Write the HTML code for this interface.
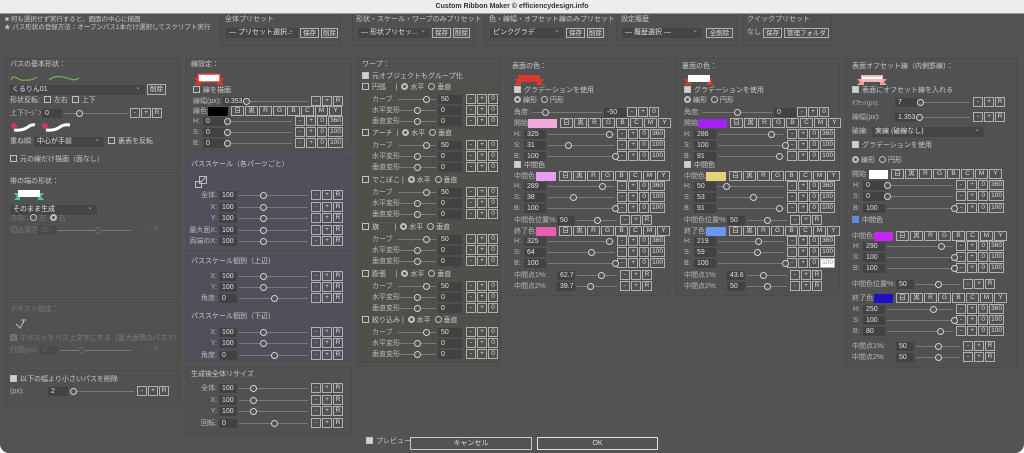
<!DOCTYPE html>
<html><head><meta charset="utf-8">
<style>
body{margin:0;width:1024px;height:453px;background:#fff;overflow:hidden;font-family:"Liberation Sans","Noto Sans CJK JP",sans-serif;position:relative}
#tb{position:absolute;left:0;top:0;width:1024px;height:13px;background:#ececec;border-bottom:1px solid #999;font-size:7px;font-weight:bold;color:#333;text-align:center;line-height:13px}
#w{position:absolute;left:0;top:14px;width:1024px;height:439px;background:#535353;border-radius:0 0 9px 9px}
.a{position:absolute;font-size:7px;color:#c8c8c8;white-space:nowrap;line-height:10px}
.p{position:absolute;border:1px solid #4b4b4b;background:#515151;box-sizing:border-box}
.r{position:absolute;display:flex;align-items:center;height:10px;font-size:7px;color:#b8b8b8;white-space:nowrap}
.r>span{flex:none}
.i{background:#424242;color:#e0e0e0;height:9px;line-height:9px;padding-left:3px;box-sizing:border-box}
.r>.s{position:relative;height:9px;flex:1 1 auto}
.s:before{content:"";position:absolute;left:2px;right:2px;top:4px;height:1px;background:#7a7a7a}
.s i{position:absolute;top:1px;width:5px;height:5px;border:1px solid #d0d0d0;border-radius:50%;background:#535353;margin-left:-3px}
.b{border:1px solid #b0b0b0;height:8px;line-height:8px;min-width:6px;padding:0 1px;margin-left:1px;font-size:6.5px;color:#ddd;text-align:center}
.c{min-width:9px}
.sw{height:9px;margin-right:2px}
.cb{display:inline-block;width:5px;height:5px;border:1px solid #c0c0c0;margin-right:3px;vertical-align:-1px}
.on{background:#d0d0d0}
.rd{display:inline-block;width:5px;height:5px;border:1px solid #c0c0c0;border-radius:50%;margin-right:2px;vertical-align:-1px}
.rd.on{background:#535353;box-shadow:inset 0 0 0 1px #d0d0d0}
.dd{position:absolute;background:#454545;color:#e0e0e0;font-size:7px;height:10px;line-height:10px;padding-left:3px;box-sizing:border-box}
.dd:after{content:"⌄";position:absolute;right:4px;top:-2px;color:#aaa;font-size:7px}
.bb{position:absolute;border:1px solid #b0b0b0;font-size:6.5px;color:#ddd;height:10px;line-height:10px;text-align:center;box-sizing:border-box}
.g{position:absolute;background:#50504a;border:1px solid #4c4c46;box-sizing:border-box}
.bl{position:absolute;background:#4f505a;border:1px solid #4b4c55;box-sizing:border-box}
.dim{color:#7a7a7a}
.dim .b{border-color:#6a6a6a;color:#6a6a6a}
</style></head><body>
<div id="tb">Custom Ribbon Maker © efficiencydesign.info</div>
<div id="w"></div>

<div class="a" style="left:5px;top:15px;font-size:6.5px">■ 何も選択せず実行すると、画面の中心に描画</div>
<div class="a" style="left:4px;top:23px;font-size:6.5px">★ パス形状の登録方法：オープンパス1本だけ選択してスクリプト実行</div>

<div class="p" style="left:220px;top:15px;width:121px;height:31px"></div>
<div class="a" style="left:225px;top:15px">全体プリセット</div>
<div class="dd" style="left:226px;top:28px;width:72px">― プリセット選択...</div>
<div class="bb" style="left:300px;top:28px;width:19px">保存</div>
<div class="bb" style="left:321px;top:28px;width:17px">削除</div>

<div class="p" style="left:352px;top:15px;width:122px;height:31px"></div>
<div class="a" style="left:356px;top:15px">形状・スケール・ワープのみプリセット</div>
<div class="dd" style="left:358px;top:28px;width:72px">― 形状プリセッ...</div>
<div class="bb" style="left:432px;top:28px;width:19px">保存</div>
<div class="bb" style="left:453px;top:28px;width:17px">削除</div>

<div class="p" style="left:484px;top:15px;width:124px;height:31px"></div>
<div class="a" style="left:489px;top:15px">色・線幅・オフセット線のみプリセット</div>
<div class="dd" style="left:490px;top:28px;width:74px">ピンクグラデ</div>
<div class="bb" style="left:566px;top:28px;width:19px">保存</div>
<div class="bb" style="left:587px;top:28px;width:17px">削除</div>

<div class="p" style="left:616px;top:15px;width:121px;height:31px"></div>
<div class="a" style="left:621px;top:15px">設定履歴</div>
<div class="dd" style="left:622px;top:28px;width:80px">― 履歴選択 ―</div>
<div class="bb" style="left:706px;top:28px;width:27px">全削除</div>

<div class="p" style="left:742px;top:15px;width:90px;height:31px"></div>
<div class="a" style="left:747px;top:15px">クイックプリセット</div>
<div class="a" style="left:747px;top:28px">なし</div>
<div class="bb" style="left:763px;top:28px;width:19px">保存</div>
<div class="bb" style="left:784px;top:28px;width:45px">管理フォルダ</div>

<!-- Column 1 -->
<div class="p" style="left:5px;top:58px;width:175px;height:112px"></div>
<div class="a" style="left:10px;top:60px">パスの基本形状：</div>
<svg style="position:absolute;left:9px;top:72px" width="72" height="12"><path d="M2 8 Q4 3 8 6 T16 8 Q22 9 28 5" stroke="#6ab04c" stroke-width="1.3" fill="none"/><path d="M40 8 Q46 3 54 5 T62 7 Q66 9 70 6" stroke="#6ab04c" stroke-width="1.3" fill="none"/></svg>
<div class="dd" style="left:9px;top:85px;width:136px">くるりん01</div>
<div class="bb" style="left:147px;top:84px;width:19px;height:11px">削除</div>
<div class="a" style="left:10px;top:96px">形状反転: &nbsp;<span class="cb"></span>左右 &nbsp;<span class="cb"></span>上下</div>
<div class="r" style="left:10px;top:108px;width:152px"><span style="width:32px">上下ﾏｰｼﾞﾝ</span><span class="i" style="width:20px">0</span><span class="s"><i style="left:25%"></i></span><span class="b">-</span><span class="b">+</span><span class="b">R</span></div>
<svg style="position:absolute;left:10px;top:121px" width="65" height="13"><path d="M4 9 Q12 10 18 6 Q22 3 25 4" stroke="#fff" stroke-width="3" fill="none"/><circle cx="4" cy="5" r="3" fill="#d0307a"/><path d="M36 9 Q44 10 50 6 Q54 3 60 4" stroke="#fff" stroke-width="3" fill="none"/><circle cx="35" cy="5" r="3" fill="#d0307a"/></svg>
<div class="a" style="left:10px;top:137px">重ね順:</div>
<div class="dd" style="left:34px;top:137px;width:70px">中心が手前</div>
<div class="a" style="left:108px;top:137px"><span class="cb"></span>裏表を反転</div>
<div class="a" style="left:10px;top:155px"><span class="cb"></span>元の線だけ描画（面なし）</div>

<div class="p" style="left:5px;top:172px;width:175px;height:128px"></div>
<div class="a" style="left:10px;top:177px">帯の端の形状：</div>
<svg style="position:absolute;left:12px;top:188px" width="34" height="14"><path d="M2 5 L8 5 L8 12 L2 12 L5 8.5Z M26 5 L32 5 L29 8.5 L32 12 L26 12Z" fill="#4fc49a"/><rect x="6" y="2" width="22" height="7" fill="#fff"/></svg>
<div class="dd" style="left:10px;top:205px;width:87px">そのまま生成</div>
<div class="a dim" style="left:10px;top:214px">方向: &nbsp;<span class="rd"></span>左 &nbsp;<span class="rd on"></span>右</div>
<div class="r dim" style="left:10px;top:225px;width:150px"><span style="width:28px">切込深さ</span><span class="i" style="width:18px;background:#4a4a4a;color:#6a6a6a">50</span><span class="s"><i style="left:55%;border-color:#6a6a6a"></i></span><span class="b" style="border:none">-</span><span class="b" style="border:none">+</span><span class="b" style="border:none">R</span></div>

<div class="p" style="left:5px;top:302px;width:175px;height:65px"></div>
<div class="a dim" style="left:10px;top:305px">テキスト設定：</div>
<svg style="position:absolute;left:14px;top:318px" width="14" height="12"><path d="M2 6 L6 10 L10 3 M7 2 L12 2 M9.5 2 L9.5 5" stroke="#bbb" stroke-width="1" fill="none"/></svg>
<div class="a dim" style="left:10px;top:334px"><span class="cb" style="border-color:#777;background:#6a6a6a"></span>テキストをパス上文字にする（最大面積のパスで）</div>
<div class="r dim" style="left:10px;top:345px;width:150px"><span style="width:30px">行間(px):</span><span class="i" style="width:18px;background:#4a4a4a;color:#6a6a6a">0</span><span class="s"><i style="left:30%;border-color:#6a6a6a"></i></span><span class="b" style="border:none">-</span><span class="b" style="border:none">+</span><span class="b" style="border:none">R</span></div>

<div class="p" style="left:5px;top:370px;width:175px;height:34px"></div>
<div class="a" style="left:10px;top:375px"><span class="cb on"></span>以下の幅より小さいパスを削除</div>
<div class="r" style="left:10px;top:386px;width:159px"><span style="width:38px">(px):</span><span class="i" style="width:20px">2</span><span class="s"><i style="left:8%"></i></span><span class="b">-</span><span class="b">+</span><span class="b">R</span></div>

<!-- Column 2 -->
<div class="p" style="left:186px;top:58px;width:166px;height:93px"></div>
<div class="a" style="left:191px;top:60px">線設定：</div>
<svg style="position:absolute;left:192px;top:72px" width="34" height="14"><path d="M2 6 L9 6 L9 13 L2 13 L5 9.5Z M25 6 L32 6 L29 9.5 L32 13 L25 13Z" fill="#d83a2e"/><rect x="6" y="2" width="22" height="8" fill="#fff" stroke="#d83a2e" stroke-width="1.5"/></svg>
<div class="a" style="left:193px;top:86px"><span class="cb"></span>線を描画</div>
<div class="r" style="left:193px;top:96px;width:150px"><span style="width:29px">線幅(px):</span><span class="i" style="width:22px">0.353</span><span class="s"><i style="left:3%"></i></span><span class="b">-</span><span class="b">+</span><span class="b">R</span></div>
<div class="r" style="left:193px;top:106px;width:150px"><span style="width:15px">線色:</span><span class="sw" style="width:20px;background:#000"></span><span class="b c">白</span><span class="b c">黒</span><span class="b c">R</span><span class="b c">G</span><span class="b c">B</span><span class="b c">C</span><span class="b c">M</span><span class="b c">Y</span></div>
<div class="r" style="left:193px;top:116px;width:150px"><span style="width:10px">H:</span><span class="i" style="width:22px">0</span><span class="s"><i style="left:3%"></i></span><span class="b">-</span><span class="b">+</span><span class="b">0</span><span class="b">360</span></div>
<div class="r" style="left:193px;top:127px;width:150px"><span style="width:10px">S:</span><span class="i" style="width:22px">0</span><span class="s"><i style="left:3%"></i></span><span class="b">-</span><span class="b">+</span><span class="b">0</span><span class="b">100</span></div>
<div class="r" style="left:193px;top:138px;width:150px"><span style="width:10px">B:</span><span class="i" style="width:22px">0</span><span class="s"><i style="left:3%"></i></span><span class="b">-</span><span class="b">+</span><span class="b">0</span><span class="b">100</span></div>

<div class="bl" style="left:186px;top:156px;width:166px;height:96px"></div>
<div class="a" style="left:191px;top:160px">パススケール（各パーツごと）</div>
<svg style="position:absolute;left:194px;top:175px" width="14" height="14"><rect x="1.5" y="6.5" width="6" height="6" stroke="#bbb" fill="none"/><rect x="5.5" y="1.5" width="7" height="7" stroke="#bbb" fill="none"/><path d="M8 6 L12 2" stroke="#bbb"/></svg>
<div class="r" style="left:188px;top:190px;width:155px"><span style="width:31px;text-align:right;padding-right:2px;box-sizing:border-box">全体:</span><span class="i" style="width:18px">100</span><span class="s"><i style="left:35%"></i></span><span class="b">-</span><span class="b">+</span><span class="b">R</span></div>
<div class="r" style="left:188px;top:202px;width:155px"><span style="width:31px;text-align:right;padding-right:2px;box-sizing:border-box">X:</span><span class="i" style="width:18px">100</span><span class="s"><i style="left:35%"></i></span><span class="b">-</span><span class="b">+</span><span class="b">R</span></div>
<div class="r" style="left:188px;top:213px;width:155px"><span style="width:31px;text-align:right;padding-right:2px;box-sizing:border-box">Y:</span><span class="i" style="width:18px">100</span><span class="s"><i style="left:35%"></i></span><span class="b">-</span><span class="b">+</span><span class="b">R</span></div>
<div class="r" style="left:188px;top:225px;width:155px"><span style="width:31px;text-align:right;padding-right:2px;box-sizing:border-box">最大面X:</span><span class="i" style="width:18px">100</span><span class="s"><i style="left:35%"></i></span><span class="b">-</span><span class="b">+</span><span class="b">R</span></div>
<div class="r" style="left:188px;top:236px;width:155px"><span style="width:31px;text-align:right;padding-right:2px;box-sizing:border-box">両端のX:</span><span class="i" style="width:18px">100</span><span class="s"><i style="left:35%"></i></span><span class="b">-</span><span class="b">+</span><span class="b">R</span></div>

<div class="bl" style="left:186px;top:255px;width:166px;height:52px"></div>
<div class="a" style="left:191px;top:257px">パススケール個別（上辺）</div>
<div class="r" style="left:188px;top:271px;width:155px"><span style="width:31px;text-align:right;padding-right:2px;box-sizing:border-box">X:</span><span class="i" style="width:18px">100</span><span class="s"><i style="left:35%"></i></span><span class="b">-</span><span class="b">+</span><span class="b">R</span></div>
<div class="r" style="left:188px;top:282px;width:155px"><span style="width:31px;text-align:right;padding-right:2px;box-sizing:border-box">Y:</span><span class="i" style="width:18px">100</span><span class="s"><i style="left:35%"></i></span><span class="b">-</span><span class="b">+</span><span class="b">R</span></div>
<div class="r" style="left:188px;top:293px;width:155px"><span style="width:31px;text-align:right;padding-right:2px;box-sizing:border-box">角度:</span><span class="i" style="width:18px">0</span><span class="s"><i style="left:51%"></i></span><span class="b">-</span><span class="b">+</span><span class="b">R</span></div>

<div class="bl" style="left:186px;top:310px;width:166px;height:52px"></div>
<div class="a" style="left:191px;top:312px">パススケール個別（下辺）</div>
<div class="r" style="left:188px;top:327px;width:155px"><span style="width:31px;text-align:right;padding-right:2px;box-sizing:border-box">X:</span><span class="i" style="width:18px">100</span><span class="s"><i style="left:35%"></i></span><span class="b">-</span><span class="b">+</span><span class="b">R</span></div>
<div class="r" style="left:188px;top:338px;width:155px"><span style="width:31px;text-align:right;padding-right:2px;box-sizing:border-box">Y:</span><span class="i" style="width:18px">100</span><span class="s"><i style="left:35%"></i></span><span class="b">-</span><span class="b">+</span><span class="b">R</span></div>
<div class="r" style="left:188px;top:350px;width:155px"><span style="width:31px;text-align:right;padding-right:2px;box-sizing:border-box">角度:</span><span class="i" style="width:18px">0</span><span class="s"><i style="left:51%"></i></span><span class="b">-</span><span class="b">+</span><span class="b">R</span></div>

<div class="p" style="left:186px;top:366px;width:166px;height:68px"></div>
<div class="a" style="left:191px;top:370px">生成後全体リサイズ</div>
<div class="r" style="left:188px;top:383px;width:155px"><span style="width:31px;text-align:right;padding-right:2px;box-sizing:border-box">全体:</span><span class="i" style="width:18px">100</span><span class="s"><i style="left:22%"></i></span><span class="b">-</span><span class="b">+</span><span class="b">R</span></div>
<div class="r" style="left:188px;top:395px;width:155px"><span style="width:31px;text-align:right;padding-right:2px;box-sizing:border-box">X:</span><span class="i" style="width:18px">100</span><span class="s"><i style="left:22%"></i></span><span class="b">-</span><span class="b">+</span><span class="b">R</span></div>
<div class="r" style="left:188px;top:406px;width:155px"><span style="width:31px;text-align:right;padding-right:2px;box-sizing:border-box">Y:</span><span class="i" style="width:18px">100</span><span class="s"><i style="left:22%"></i></span><span class="b">-</span><span class="b">+</span><span class="b">R</span></div>
<div class="r" style="left:188px;top:418px;width:155px"><span style="width:31px;text-align:right;padding-right:2px;box-sizing:border-box">回転:</span><span class="i" style="width:18px">0</span><span class="s"><i style="left:51%"></i></span><span class="b">-</span><span class="b">+</span><span class="b">R</span></div>

<!-- Column 3 Warp -->
<div class="p" style="left:357px;top:58px;width:144px;height:308px"></div>
<div class="a" style="left:362px;top:60px">ワープ：</div>
<div class="a" style="left:362px;top:72px"><span class="cb on"></span>元オブジェクトもグループ化</div>

<div class="g" style="left:360px;top:84px;width:139px;height:44px"></div>
<div class="a" style="left:362px;top:83px"><span class="cb"></span>円弧 &nbsp;&nbsp;&nbsp;&nbsp;| &nbsp;<span class="rd on"></span>水平 &nbsp;<span class="rd"></span>垂直</div>
<div class="r" style="left:372px;top:94px;width:126px"><span style="width:24px">カーブ</span><span class="s"><i style="left:72%"></i></span><span class="i" style="width:24px">50</span><span style="width:3px"></span><span class="b">-</span><span class="b">+</span><span class="b">0</span></div>
<div class="r" style="left:372px;top:105px;width:126px"><span style="width:24px">水平変形</span><span class="s"><i style="left:50%"></i></span><span class="i" style="width:24px">0</span><span style="width:3px"></span><span class="b">-</span><span class="b">+</span><span class="b">0</span></div>
<div class="r" style="left:372px;top:116px;width:126px"><span style="width:24px">垂直変形</span><span class="s"><i style="left:50%"></i></span><span class="i" style="width:24px">0</span><span style="width:3px"></span><span class="b">-</span><span class="b">+</span><span class="b">0</span></div>

<div class="g" style="left:360px;top:130px;width:139px;height:44px"></div>
<div class="a" style="left:362px;top:129px"><span class="cb"></span>アーチ &nbsp;| &nbsp;<span class="rd on"></span>水平 &nbsp;<span class="rd"></span>垂直</div>
<div class="r" style="left:372px;top:140px;width:126px"><span style="width:24px">カーブ</span><span class="s"><i style="left:72%"></i></span><span class="i" style="width:24px">50</span><span style="width:3px"></span><span class="b">-</span><span class="b">+</span><span class="b">0</span></div>
<div class="r" style="left:372px;top:151px;width:126px"><span style="width:24px">水平変形</span><span class="s"><i style="left:50%"></i></span><span class="i" style="width:24px">0</span><span style="width:3px"></span><span class="b">-</span><span class="b">+</span><span class="b">0</span></div>
<div class="r" style="left:372px;top:162px;width:126px"><span style="width:24px">垂直変形</span><span class="s"><i style="left:50%"></i></span><span class="i" style="width:24px">0</span><span style="width:3px"></span><span class="b">-</span><span class="b">+</span><span class="b">0</span></div>

<div class="g" style="left:360px;top:177px;width:139px;height:44px"></div>
<div class="a" style="left:362px;top:176px"><span class="cb"></span>でこぼこ | &nbsp;<span class="rd on"></span>水平 &nbsp;<span class="rd"></span>垂直</div>
<div class="r" style="left:372px;top:187px;width:126px"><span style="width:24px">カーブ</span><span class="s"><i style="left:72%"></i></span><span class="i" style="width:24px">50</span><span style="width:3px"></span><span class="b">-</span><span class="b">+</span><span class="b">0</span></div>
<div class="r" style="left:372px;top:198px;width:126px"><span style="width:24px">水平変形</span><span class="s"><i style="left:50%"></i></span><span class="i" style="width:24px">0</span><span style="width:3px"></span><span class="b">-</span><span class="b">+</span><span class="b">0</span></div>
<div class="r" style="left:372px;top:209px;width:126px"><span style="width:24px">垂直変形</span><span class="s"><i style="left:50%"></i></span><span class="i" style="width:24px">0</span><span style="width:3px"></span><span class="b">-</span><span class="b">+</span><span class="b">0</span></div>

<div class="g" style="left:360px;top:224px;width:139px;height:44px"></div>
<div class="a" style="left:362px;top:223px"><span class="cb"></span>旗 &nbsp;&nbsp;&nbsp;&nbsp;&nbsp;&nbsp;&nbsp;| &nbsp;<span class="rd on"></span>水平 &nbsp;<span class="rd"></span>垂直</div>
<div class="r" style="left:372px;top:234px;width:126px"><span style="width:24px">カーブ</span><span class="s"><i style="left:72%"></i></span><span class="i" style="width:24px">50</span><span style="width:3px"></span><span class="b">-</span><span class="b">+</span><span class="b">0</span></div>
<div class="r" style="left:372px;top:245px;width:126px"><span style="width:24px">水平変形</span><span class="s"><i style="left:50%"></i></span><span class="i" style="width:24px">0</span><span style="width:3px"></span><span class="b">-</span><span class="b">+</span><span class="b">0</span></div>
<div class="r" style="left:372px;top:256px;width:126px"><span style="width:24px">垂直変形</span><span class="s"><i style="left:50%"></i></span><span class="i" style="width:24px">0</span><span style="width:3px"></span><span class="b">-</span><span class="b">+</span><span class="b">0</span></div>

<div class="g" style="left:360px;top:271px;width:139px;height:44px"></div>
<div class="a" style="left:362px;top:270px"><span class="cb"></span>膨張 &nbsp;&nbsp;&nbsp;&nbsp;| &nbsp;<span class="rd on"></span>水平 &nbsp;<span class="rd"></span>垂直</div>
<div class="r" style="left:372px;top:281px;width:126px"><span style="width:24px">カーブ</span><span class="s"><i style="left:72%"></i></span><span class="i" style="width:24px">50</span><span style="width:3px"></span><span class="b">-</span><span class="b">+</span><span class="b">0</span></div>
<div class="r" style="left:372px;top:292px;width:126px"><span style="width:24px">水平変形</span><span class="s"><i style="left:50%"></i></span><span class="i" style="width:24px">0</span><span style="width:3px"></span><span class="b">-</span><span class="b">+</span><span class="b">0</span></div>
<div class="r" style="left:372px;top:303px;width:126px"><span style="width:24px">垂直変形</span><span class="s"><i style="left:50%"></i></span><span class="i" style="width:24px">0</span><span style="width:3px"></span><span class="b">-</span><span class="b">+</span><span class="b">0</span></div>

<div class="g" style="left:360px;top:317px;width:139px;height:46px"></div>
<div class="a" style="left:362px;top:316px"><span class="cb"></span>絞り込み | &nbsp;<span class="rd on"></span>水平 &nbsp;<span class="rd"></span>垂直</div>
<div class="r" style="left:372px;top:327px;width:126px"><span style="width:24px">カーブ</span><span class="s"><i style="left:72%"></i></span><span class="i" style="width:24px">50</span><span style="width:3px"></span><span class="b">-</span><span class="b">+</span><span class="b">0</span></div>
<div class="r" style="left:372px;top:338px;width:126px"><span style="width:24px">水平変形</span><span class="s"><i style="left:50%"></i></span><span class="i" style="width:24px">0</span><span style="width:3px"></span><span class="b">-</span><span class="b">+</span><span class="b">0</span></div>
<div class="r" style="left:372px;top:349px;width:126px"><span style="width:24px">垂直変形</span><span class="s"><i style="left:50%"></i></span><span class="i" style="width:24px">0</span><span style="width:3px"></span><span class="b">-</span><span class="b">+</span><span class="b">0</span></div>

<!-- Column 4 -->
<div class="p" style="left:505px;top:58px;width:165px;height:238px"></div>
<div class="a" style="left:512px;top:62px">表面の色：</div>
<svg style="position:absolute;left:512px;top:73px" width="34" height="13"><path d="M2 6 L9 6 L9 12 L2 12 L5 9Z M25 6 L32 6 L29 9 L32 12 L25 12Z" fill="#d83a2e"/><rect x="6" y="2" width="22" height="7" fill="#d83a2e"/></svg>
<div class="a" style="left:514px;top:86px"><span class="cb on"></span>グラデーションを使用</div>
<div class="a" style="left:514px;top:96px"><span class="rd on"></span>線形 &nbsp;<span class="rd"></span>円形</div>
<div class="r" style="left:514px;top:107px;width:145px"><span style="width:16px">角度:</span><span class="s"><i style="left:20%"></i></span><span class="i" style="width:22px">-50</span><span class="b">-</span><span class="b">+</span><span class="b">0</span></div>
<div class="r" style="left:514px;top:118px;width:152px"><span style="width:14px">開始色:</span><span class="sw" style="width:29px;background:#f2a9dc"></span><span class="b c">白</span><span class="b c">黒</span><span class="b c">R</span><span class="b c">G</span><span class="b c">B</span><span class="b c">C</span><span class="b c">M</span><span class="b c">Y</span></div>
<div class="r" style="left:514px;top:129px;width:151px"><span style="width:10px">H:</span><span class="i" style="width:22px">325</span><span class="s"><i style="left:90%"></i></span><span class="b">-</span><span class="b">+</span><span class="b">0</span><span class="b">360</span></div>
<div class="r" style="left:514px;top:140px;width:151px"><span style="width:10px">S:</span><span class="i" style="width:22px">31</span><span class="s"><i style="left:31%"></i></span><span class="b">-</span><span class="b">+</span><span class="b">0</span><span class="b">100</span></div>
<div class="r" style="left:514px;top:151px;width:151px"><span style="width:10px">B:</span><span class="i" style="width:22px">100</span><span class="s"><i style="left:98%"></i></span><span class="b">-</span><span class="b">+</span><span class="b">0</span><span class="b">100</span></div>
<div class="a" style="left:514px;top:161px"><span class="cb on"></span>中間色</div>
<div class="r" style="left:514px;top:171px;width:152px"><span style="width:22px">中間色:</span><span class="sw" style="width:20px;background:#e89cf2"></span><span class="b c">白</span><span class="b c">黒</span><span class="b c">R</span><span class="b c">G</span><span class="b c">B</span><span class="b c">C</span><span class="b c">M</span><span class="b c">Y</span></div>
<div class="r" style="left:514px;top:181px;width:151px"><span style="width:10px">H:</span><span class="i" style="width:22px">289</span><span class="s"><i style="left:80%"></i></span><span class="b">-</span><span class="b">+</span><span class="b">0</span><span class="b">360</span></div>
<div class="r" style="left:514px;top:192px;width:151px"><span style="width:10px">S:</span><span class="i" style="width:22px">38</span><span class="s"><i style="left:38%"></i></span><span class="b">-</span><span class="b">+</span><span class="b">0</span><span class="b">100</span></div>
<div class="r" style="left:514px;top:203px;width:151px"><span style="width:10px">B:</span><span class="i" style="width:22px">100</span><span class="s"><i style="left:98%"></i></span><span class="b">-</span><span class="b">+</span><span class="b">0</span><span class="b">100</span></div>
<div class="r" style="left:514px;top:215px;width:138px"><span style="width:43px">中間色位置%:</span><span class="i" style="width:18px">50</span><span class="s"><i style="left:50%"></i></span><span class="b">-</span><span class="b">+</span><span class="b">R</span></div>
<div class="r" style="left:514px;top:226px;width:152px"><span style="width:22px">終了色:</span><span class="sw" style="width:20px;background:#ec5eb4"></span><span class="b c">白</span><span class="b c">黒</span><span class="b c">R</span><span class="b c">G</span><span class="b c">B</span><span class="b c">C</span><span class="b c">M</span><span class="b c">Y</span></div>
<div class="r" style="left:514px;top:236px;width:151px"><span style="width:10px">H:</span><span class="i" style="width:22px">325</span><span class="s"><i style="left:90%"></i></span><span class="b">-</span><span class="b">+</span><span class="b">0</span><span class="b">360</span></div>
<div class="r" style="left:514px;top:247px;width:151px"><span style="width:10px">S:</span><span class="i" style="width:22px">64</span><span class="s"><i style="left:64%"></i></span><span class="b">-</span><span class="b">+</span><span class="b">0</span><span class="b">100</span></div>
<div class="r" style="left:514px;top:258px;width:151px"><span style="width:10px">B:</span><span class="i" style="width:22px">100</span><span class="s"><i style="left:98%"></i></span><span class="b">-</span><span class="b">+</span><span class="b">0</span><span class="b">100</span></div>
<div class="r" style="left:514px;top:270px;width:138px"><span style="width:43px">中間点1%:</span><span class="i" style="width:18px">62.7</span><span class="s"><i style="left:58%"></i></span><span class="b">-</span><span class="b">+</span><span class="b">R</span></div>
<div class="r" style="left:514px;top:281px;width:138px"><span style="width:43px">中間点2%:</span><span class="i" style="width:18px">39.7</span><span class="s"><i style="left:35%"></i></span><span class="b">-</span><span class="b">+</span><span class="b">R</span></div>

<!-- Column 5 -->
<div class="p" style="left:675px;top:58px;width:165px;height:238px"></div>
<div class="a" style="left:682px;top:62px">裏面の色：</div>
<svg style="position:absolute;left:682px;top:73px" width="34" height="13"><path d="M2 6 L9 6 L9 12 L2 12 L5 9Z M25 6 L32 6 L29 9 L32 12 L25 12Z" fill="#d83a2e"/><rect x="6" y="2" width="22" height="7" fill="#fff"/></svg>
<div class="a" style="left:684px;top:86px"><span class="cb on"></span>グラデーションを使用</div>
<div class="a" style="left:684px;top:96px"><span class="rd on"></span>線形 &nbsp;<span class="rd"></span>円形</div>
<div class="r" style="left:684px;top:107px;width:145px"><span style="width:16px">角度:</span><span class="s"><i style="left:50%"></i></span><span class="i" style="width:22px">0</span><span class="b">-</span><span class="b">+</span><span class="b">0</span></div>
<div class="r" style="left:684px;top:118px;width:152px"><span style="width:14px">開始色:</span><span class="sw" style="width:29px;background:#a323f0"></span><span class="b c">白</span><span class="b c">黒</span><span class="b c">R</span><span class="b c">G</span><span class="b c">B</span><span class="b c">C</span><span class="b c">M</span><span class="b c">Y</span></div>
<div class="r" style="left:684px;top:129px;width:151px"><span style="width:10px">H:</span><span class="i" style="width:22px">286</span><span class="s"><i style="left:79%"></i></span><span class="b">-</span><span class="b">+</span><span class="b">0</span><span class="b">360</span></div>
<div class="r" style="left:684px;top:140px;width:151px"><span style="width:10px">S:</span><span class="i" style="width:22px">100</span><span class="s"><i style="left:98%"></i></span><span class="b">-</span><span class="b">+</span><span class="b">0</span><span class="b">100</span></div>
<div class="r" style="left:684px;top:151px;width:151px"><span style="width:10px">B:</span><span class="i" style="width:22px">91</span><span class="s"><i style="left:90%"></i></span><span class="b">-</span><span class="b">+</span><span class="b">0</span><span class="b">100</span></div>
<div class="a" style="left:684px;top:161px"><span class="cb on"></span>中間色</div>
<div class="r" style="left:684px;top:171px;width:152px"><span style="width:22px">中間色:</span><span class="sw" style="width:20px;background:#e8d277"></span><span class="b c">白</span><span class="b c">黒</span><span class="b c">R</span><span class="b c">G</span><span class="b c">B</span><span class="b c">C</span><span class="b c">M</span><span class="b c">Y</span></div>
<div class="r" style="left:684px;top:181px;width:151px"><span style="width:10px">H:</span><span class="i" style="width:22px">50</span><span class="s"><i style="left:14%"></i></span><span class="b">-</span><span class="b">+</span><span class="b">0</span><span class="b">360</span></div>
<div class="r" style="left:684px;top:192px;width:151px"><span style="width:10px">S:</span><span class="i" style="width:22px">53</span><span class="s"><i style="left:53%"></i></span><span class="b">-</span><span class="b">+</span><span class="b">0</span><span class="b">100</span></div>
<div class="r" style="left:684px;top:203px;width:151px"><span style="width:10px">B:</span><span class="i" style="width:22px">91</span><span class="s"><i style="left:90%"></i></span><span class="b">-</span><span class="b">+</span><span class="b">0</span><span class="b">100</span></div>
<div class="r" style="left:684px;top:215px;width:138px"><span style="width:43px">中間色位置%:</span><span class="i" style="width:18px">50</span><span class="s"><i style="left:50%"></i></span><span class="b">-</span><span class="b">+</span><span class="b">R</span></div>
<div class="r" style="left:684px;top:226px;width:152px"><span style="width:22px">終了色:</span><span class="sw" style="width:20px;background:#6d96f2"></span><span class="b c">白</span><span class="b c">黒</span><span class="b c">R</span><span class="b c">G</span><span class="b c">B</span><span class="b c">C</span><span class="b c">M</span><span class="b c">Y</span></div>
<div class="r" style="left:684px;top:236px;width:151px"><span style="width:10px">H:</span><span class="i" style="width:22px">219</span><span class="s"><i style="left:60%"></i></span><span class="b">-</span><span class="b">+</span><span class="b">0</span><span class="b">360</span></div>
<div class="r" style="left:684px;top:247px;width:151px"><span style="width:10px">S:</span><span class="i" style="width:22px">59</span><span class="s"><i style="left:59%"></i></span><span class="b">-</span><span class="b">+</span><span class="b">0</span><span class="b">100</span></div>
<div class="r" style="left:684px;top:258px;width:151px"><span style="width:10px">B:</span><span class="i" style="width:22px">100</span><span class="s"><i style="left:98%"></i></span><span class="b">-</span><span class="b">+</span><span class="b">0</span><span class="b" style="background:#fff;color:#999">100</span></div>
<div class="r" style="left:684px;top:270px;width:138px"><span style="width:43px">中間点1%:</span><span class="i" style="width:18px">43.6</span><span class="s"><i style="left:42%"></i></span><span class="b">-</span><span class="b">+</span><span class="b">R</span></div>
<div class="r" style="left:684px;top:281px;width:138px"><span style="width:43px">中間点2%:</span><span class="i" style="width:18px">50</span><span class="s"><i style="left:50%"></i></span><span class="b">-</span><span class="b">+</span><span class="b">R</span></div>

<!-- Column 6 -->
<div class="p" style="left:845px;top:58px;width:172px;height:310px"></div>
<div class="a" style="left:852px;top:62px">表面オフセット線（内側罫線）：</div>
<svg style="position:absolute;left:855px;top:73px" width="34" height="13"><path d="M2 6 L9 6 L9 12 L2 12 L5 9Z M25 6 L32 6 L29 9 L32 12 L25 12Z" fill="#e9a0a0"/><rect x="6" y="2" width="22" height="7" fill="#f0b8b8"/><rect x="7" y="4" width="20" height="2" fill="#fff"/></svg>
<div class="a" style="left:852px;top:86px"><span class="cb on"></span>表面にオフセット線を入れる</div>
<div class="r" style="left:852px;top:97px;width:153px"><span style="width:43px;font-size:6px">ｵﾌｾｯﾄ(px):</span><span class="i" style="width:22px">7</span><span class="s"><i style="left:5%"></i></span><span class="b">-</span><span class="b">+</span><span class="b">R</span></div>
<div class="r" style="left:852px;top:112px;width:153px"><span style="width:43px">線幅(px):</span><span class="i" style="width:22px">1.353</span><span class="s"><i style="left:3%"></i></span><span class="b">-</span><span class="b">+</span><span class="b">R</span></div>
<div class="a" style="left:852px;top:127px">破線:</div>
<div class="dd" style="left:872px;top:127px;width:112px">実線 (破線なし)</div>
<div class="a" style="left:852px;top:141px"><span class="cb on"></span>グラデーションを使用</div>
<div class="a" style="left:852px;top:156px"><span class="rd on"></span>線形 &nbsp;<span class="rd"></span>円形</div>
<div class="r" style="left:852px;top:169px;width:152px"><span style="width:17px">開始</span><span class="sw" style="width:19px;background:#fff"></span><span class="b c">白</span><span class="b c">黒</span><span class="b c">R</span><span class="b c">G</span><span class="b c">B</span><span class="b c">C</span><span class="b c">M</span><span class="b c">Y</span></div>
<div class="r" style="left:853px;top:180px;width:151px"><span style="width:10px">H:</span><span class="i" style="width:22px">0</span><span class="s"><i style="left:3%"></i></span><span class="b">-</span><span class="b">+</span><span class="b">0</span><span class="b">360</span></div>
<div class="r" style="left:853px;top:191px;width:151px"><span style="width:10px">S:</span><span class="i" style="width:22px">0</span><span class="s"><i style="left:3%"></i></span><span class="b">-</span><span class="b">+</span><span class="b">0</span><span class="b">100</span></div>
<div class="r" style="left:853px;top:203px;width:151px"><span style="width:10px">B:</span><span class="i" style="width:22px">100</span><span class="s"><i style="left:98%"></i></span><span class="b">-</span><span class="b">+</span><span class="b">0</span><span class="b">100</span></div>
<div class="a" style="left:852px;top:216px"><span class="cb" style="background:#5a8ee0;border-color:#5a8ee0"></span>中間色</div>
<div class="r" style="left:852px;top:231px;width:152px"><span style="width:22px">中間色:</span><span class="sw" style="width:19px;background:#c525f2"></span><span class="b c">白</span><span class="b c">黒</span><span class="b c">R</span><span class="b c">G</span><span class="b c">B</span><span class="b c">C</span><span class="b c">M</span><span class="b c">Y</span></div>
<div class="r" style="left:853px;top:241px;width:151px"><span style="width:10px">H:</span><span class="i" style="width:22px">290</span><span class="s"><i style="left:80%"></i></span><span class="b">-</span><span class="b">+</span><span class="b">0</span><span class="b">360</span></div>
<div class="r" style="left:853px;top:252px;width:151px"><span style="width:10px">S:</span><span class="i" style="width:22px">100</span><span class="s"><i style="left:98%"></i></span><span class="b">-</span><span class="b">+</span><span class="b">0</span><span class="b">100</span></div>
<div class="r" style="left:853px;top:263px;width:151px"><span style="width:10px">B:</span><span class="i" style="width:22px">100</span><span class="s"><i style="left:98%"></i></span><span class="b">-</span><span class="b">+</span><span class="b">0</span><span class="b">100</span></div>
<div class="r" style="left:852px;top:279px;width:143px"><span style="width:44px">中間色位置%:</span><span class="i" style="width:18px">50</span><span class="s"><i style="left:50%"></i></span><span class="b">-</span><span class="b">+</span><span class="b">R</span></div>
<div class="r" style="left:852px;top:293px;width:152px"><span style="width:22px">終了色:</span><span class="sw" style="width:19px;background:#2010c4"></span><span class="b c">白</span><span class="b c">黒</span><span class="b c">R</span><span class="b c">G</span><span class="b c">B</span><span class="b c">C</span><span class="b c">M</span><span class="b c">Y</span></div>
<div class="r" style="left:853px;top:304px;width:151px"><span style="width:10px">H:</span><span class="i" style="width:22px">250</span><span class="s"><i style="left:69%"></i></span><span class="b">-</span><span class="b">+</span><span class="b">0</span><span class="b">360</span></div>
<div class="r" style="left:853px;top:315px;width:151px"><span style="width:10px">S:</span><span class="i" style="width:22px">100</span><span class="s"><i style="left:98%"></i></span><span class="b">-</span><span class="b">+</span><span class="b">0</span><span class="b">100</span></div>
<div class="r" style="left:853px;top:326px;width:151px"><span style="width:10px">B:</span><span class="i" style="width:22px">80</span><span class="s"><i style="left:78%"></i></span><span class="b">-</span><span class="b">+</span><span class="b">0</span><span class="b">100</span></div>
<div class="r" style="left:852px;top:341px;width:143px"><span style="width:44px">中間点1%:</span><span class="i" style="width:18px">50</span><span class="s"><i style="left:50%"></i></span><span class="b">-</span><span class="b">+</span><span class="b">R</span></div>
<div class="r" style="left:852px;top:352px;width:143px"><span style="width:44px">中間点2%:</span><span class="i" style="width:18px">50</span><span class="s"><i style="left:50%"></i></span><span class="b">-</span><span class="b">+</span><span class="b">R</span></div>

<!-- bottom -->
<div class="a" style="left:366px;top:437px"><span class="cb on"></span>プレビュー</div>
<div class="bb" style="left:410px;top:437px;width:122px;height:13px;line-height:11px;border-color:#c8c8c8;font-size:7px">キャンセル</div>
<div class="bb" style="left:537px;top:437px;width:121px;height:13px;line-height:11px;border-color:#e0e0e0;font-size:7px">OK</div>
</body></html>
